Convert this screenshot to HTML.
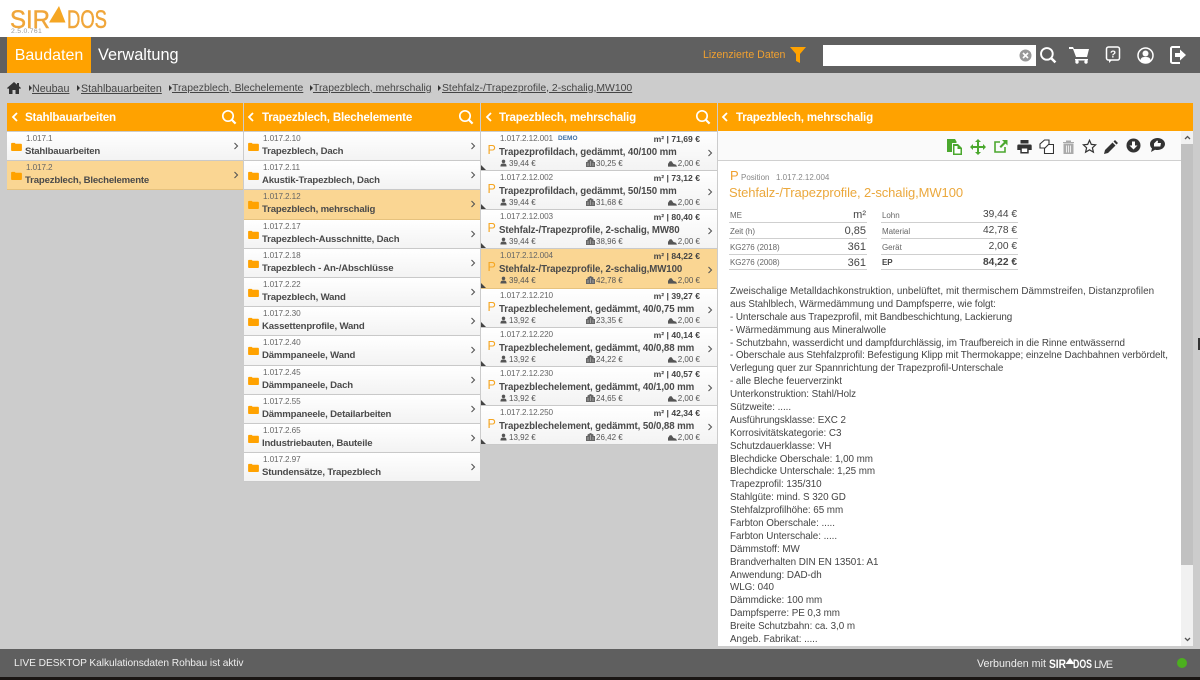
<!DOCTYPE html>
<html lang="de"><head><meta charset="utf-8"><title>SIRADOS</title>
<style>
*{box-sizing:border-box}
html,body{margin:0;padding:0;width:1200px;height:680px;overflow:hidden;background:#cccccc;font-family:"Liberation Sans",sans-serif;color:#444}
.a{position:absolute;white-space:nowrap}
#top{position:absolute;left:0;top:0;width:1200px;height:37px;background:#fff}
#nav{position:absolute;left:0;top:37px;width:1200px;height:36px;background:#606060}
#bau{position:absolute;left:7px;top:37px;width:84px;height:36px;background:#ffa200;color:#fff;font-size:16px;line-height:37px;text-align:center}
.hd{position:absolute;top:103px;height:28px;background:#ffa200;color:#fff;font-weight:bold;font-size:11.6px;line-height:27px;letter-spacing:-.2px}
.hd b{position:absolute;left:18px;top:1px;white-space:nowrap}
.c{position:absolute;background:#fff}
.r{position:absolute;left:0;background:linear-gradient(#fff,#f3f3f3);border-bottom:1px solid #c9c9c9}
.r.s{background:#fad693;border-bottom-color:#e6c27e}
.code{position:absolute;left:19px;top:2px;font-size:8.2px;letter-spacing:-.12px;color:#666;white-space:nowrap}
.t{position:absolute;left:18px;top:14px;font-size:9.6px;letter-spacing:-.17px;font-weight:bold;color:#4a4a4a;white-space:nowrap}
.i{position:absolute}
.code3{position:absolute;left:19px;top:2px;font-size:8.2px;letter-spacing:-.12px;color:#666;white-space:nowrap}
.code3 b{position:absolute;left:58px;top:1px;color:#3b6ea5;font-size:6.5px;letter-spacing:0}
.pr{position:absolute;right:17px;top:2px;font-size:8.6px;font-weight:bold;color:#444;white-space:nowrap}
.t3{position:absolute;left:18px;top:14.5px;font-size:9.7px;letter-spacing:-.09px;font-weight:bold;color:#4a4a4a;white-space:nowrap}
.p{position:absolute;left:6.5px;top:10.5px;font-size:12.5px;color:#f5a623}
.v{position:absolute;top:26.5px;font-size:8px;color:#555;white-space:nowrap}
.bc{position:absolute;top:82.5px;font-size:10.4px;color:#444;text-decoration:underline;white-space:nowrap}
.tri{position:absolute;top:85px;width:0;height:0;border-left:3px solid #333;border-top:3px solid transparent;border-bottom:3px solid transparent}
.lab{position:absolute;font-size:8px;letter-spacing:-.05px;color:#666;white-space:nowrap}
.val{position:absolute;font-size:10.2px;color:#444;text-align:right;white-space:nowrap}
.ln{position:absolute;height:1px;background:#cfcfcf}
#txt{position:absolute;left:730px;top:286px;width:450px;font-size:9.85px;letter-spacing:-.05px;line-height:12.89px;color:#444;white-space:pre}
</style></head><body>
<svg width="0" height="0" style="position:absolute"><defs>
<symbol id="folder" viewBox="0 0 12 10"><path d="M0 2a1 1 0 0 1 1-1h3l1 1h6a1 1 0 0 1 1 1v6a1 1 0 0 1-1 1H1a1 1 0 0 1-1-1z" fill="#ffa200"/></symbol>
<symbol id="chev" viewBox="0 0 6 8"><path d="M1.5 1l3 3-3 3" fill="none" stroke="#555" stroke-width="1.1"/></symbol>
<symbol id="back" viewBox="0 0 8 12"><path d="M6 2L2 6l4 4" fill="none" stroke="#fff" stroke-width="1.8"/></symbol>
<symbol id="search" viewBox="0 0 16 16"><circle cx="7" cy="7" r="5.2" fill="none" stroke="#fff" stroke-width="1.7"/><path d="M11 11l3.600 3.600" stroke="#fff" stroke-width="2.2"/></symbol>
<symbol id="person" viewBox="0 0 8 8"><circle cx="4" cy="2.2" r="2" fill="#555"/><path d="M0.5 8c0-3 1.500-3.400 3.500-3.400S7.500 5 7.500 8z" fill="#555"/></symbol>
<symbol id="bld" viewBox="0 0 9 8"><path d="M0 8V3h1.500V1.500L4.500 0l3 1.500V3H9v5z" fill="#666"/><path d="M2 4v3M4.500 2v5M7 4v3" stroke="#ccc" stroke-width=".6"/></symbol>
<symbol id="hat" viewBox="0 0 10 8"><path d="M0 8V5l2-3h2l2 3 3 1 1 2z" fill="#555"/></symbol>
<symbol id="corner" viewBox="0 0 5 5"><path d="M0 0l5 5H0z" fill="#444"/></symbol>
</defs></svg>

<div id="top"></div>
<svg class="a" style="left:8px;top:5px" width="104" height="30" viewBox="0 0 104 30">
<text x="2" y="23" font-family="Liberation Sans" font-size="25" fill="#f0a63a" stroke="#f0a63a" stroke-width=".5" textLength="40" lengthAdjust="spacingAndGlyphs">SIR</text>
<path d="M51 1L41 17.500h16.500z" fill="#f5a623"/>
<text x="59" y="23" font-family="Liberation Sans" font-size="25" fill="#f0a63a" stroke="#f0a63a" stroke-width=".5" textLength="40" lengthAdjust="spacingAndGlyphs">DOS</text>
</svg>
<div class="a" style="left:11px;top:28px;font-size:6.8px;color:#999;letter-spacing:.3px">2.5.0.761</div>

<div id="nav"></div><div id="bau">Baudaten</div>
<div class="a" style="left:98px;top:46px;font-size:16.3px;color:#fff">Verwaltung</div>
<div class="a" style="left:703px;top:49px;font-size:10.6px;color:#f0a030">Lizenzierte Daten</div>
<svg class="a" style="left:790px;top:46px" width="16" height="18" viewBox="0 0 16 18"><path d="M0 1h16L10 8v9l-4-2V8z" fill="#ffa200"/></svg>
<div class="a" style="left:823px;top:45px;width:213px;height:21px;background:#fff"></div>
<svg class="a" style="left:1019px;top:49px" width="13" height="13" viewBox="0 0 13 13"><circle cx="6.500" cy="6.500" r="6" fill="#999"/><path d="M4 4l5 5M9 4l-5 5" stroke="#fff" stroke-width="1.600"/></svg>
<svg class="a" style="left:1039px;top:46px" width="18" height="18"><use href="#search"/></svg>
<svg class="a" style="left:1069px;top:46px" width="21" height="18" viewBox="0 0 21 18"><path d="M0 1h4l1 2h15l-2 8H7L4 3H0zM6 13h13v1.500H6z" fill="#fff"/><circle cx="8" cy="16" r="1.700" fill="#fff"/><circle cx="17" cy="16" r="1.700" fill="#fff"/></svg>
<svg class="a" style="left:1105px;top:46px" width="16" height="18" viewBox="0 0 16 18"><rect x="1.500" y="1" width="13" height="13" rx="2" fill="none" stroke="#fff" stroke-width="1.500"/><path d="M4 14v3l3-3z" fill="#fff"/><text x="8" y="11.500" font-family="Liberation Sans" font-size="10" font-weight="bold" fill="#fff" text-anchor="middle">?</text></svg>
<svg class="a" style="left:1137px;top:47px" width="17" height="17" viewBox="0 0 17 17"><circle cx="8.500" cy="8.500" r="7.500" fill="none" stroke="#fff" stroke-width="1.500"/><circle cx="8.500" cy="6.500" r="3" fill="#fff"/><path d="M3.500 14c0-3.500 2-4 5-4s5 .5 5 4l-5 2z" fill="#fff"/></svg>
<svg class="a" style="left:1170px;top:46px" width="17" height="18" viewBox="0 0 17 18"><path d="M10 1H2.500A1.500 1.500 0 0 0 1 2.500v13A1.500 1.500 0 0 0 2.500 17H10" fill="none" stroke="#fff" stroke-width="2"/><path d="M5 7h5V3.500L16 9l-6 5.500V11H5z" fill="#fff"/></svg>

<svg class="a" style="left:7px;top:82px" width="14" height="12" viewBox="0 0 14 12"><path d="M7 0L0 6l1 1 1-.8V12h3.500V8h3v4H12V6.200l1 .8 1-1-2-1.700V1h-2v1.600z" fill="#333"/></svg>
<div class="tri" style="left:29px"></div><div class="bc" style="left:32px;font-size:10.7px">Neubau</div>
<div class="tri" style="left:77px"></div><div class="bc" style="left:81px;font-size:10.7px">Stahlbauarbeiten</div>
<div class="tri" style="left:169px"></div><div class="bc" style="left:172px">Trapezblech, Blechelemente</div>
<div class="tri" style="left:310px"></div><div class="bc" style="left:313px">Trapezblech, mehrschalig</div>
<div class="tri" style="left:438px"></div><div class="bc" style="left:442px">Stehfalz-/Trapezprofile, 2-schalig,MW100</div>

<!-- headers -->
<div class="hd" style="left:7px;width:236px"><svg class="i" style="left:4px;top:8px" width="8" height="12"><use href="#back"/></svg><b>Stahlbauarbeiten</b><svg class="i" style="left:214px;top:6px" width="16" height="16"><use href="#search"/></svg></div>
<div class="hd" style="left:244px;width:236px"><svg class="i" style="left:3px;top:8px" width="8" height="12"><use href="#back"/></svg><b>Trapezblech, Blechelemente</b><svg class="i" style="left:214px;top:6px" width="16" height="16"><use href="#search"/></svg></div>
<div class="hd" style="left:481px;width:236px"><svg class="i" style="left:4px;top:8px" width="8" height="12"><use href="#back"/></svg><b>Trapezblech, mehrschalig</b><svg class="i" style="left:214px;top:6px" width="16" height="16"><use href="#search"/></svg></div>
<div class="hd" style="left:718px;width:475px"><svg class="i" style="left:3px;top:8px" width="8" height="12"><use href="#back"/></svg><b>Trapezblech, mehrschalig</b></div>

<!-- col 1 -->
<div class="c" style="left:7px;top:132px;width:236px;height:58px;background:none">
<div class="r" style="top:0;width:236px;height:29px"><svg class="i" style="left:4px;top:10px" width="11" height="9"><use href="#folder"/></svg><span class="code">1.017.1</span><span class="t">Stahlbauarbeiten</span><svg class="i" style="left:226px;top:10px" width="6" height="8"><use href="#chev"/></svg></div>
<div class="r s" style="top:29px;width:236px;height:29px"><svg class="i" style="left:4px;top:10px" width="11" height="9"><use href="#folder"/></svg><span class="code">1.017.2</span><span class="t">Trapezblech, Blechelemente</span><svg class="i" style="left:226px;top:10px" width="6" height="8"><use href="#chev"/></svg></div>
</div>

<!-- col 2 -->
<div class="c" style="left:244px;top:132px;width:236px;height:350px;background:none">
<div class="r" style="top:0;width:236px;height:29px"><svg class="i" style="left:4px;top:10px" width="11" height="9"><use href="#folder"/></svg><span class="code">1.017.2.10</span><span class="t">Trapezblech, Dach</span><svg class="i" style="left:226px;top:10px" width="6" height="8"><use href="#chev"/></svg></div>
<div class="r" style="top:29px;width:236px;height:29px"><svg class="i" style="left:4px;top:10px" width="11" height="9"><use href="#folder"/></svg><span class="code">1.017.2.11</span><span class="t">Akustik-Trapezblech, Dach</span><svg class="i" style="left:226px;top:10px" width="6" height="8"><use href="#chev"/></svg></div>
<div class="r s" style="top:58px;width:236px;height:30px"><svg class="i" style="left:4px;top:10px" width="11" height="9"><use href="#folder"/></svg><span class="code">1.017.2.12</span><span class="t">Trapezblech, mehrschalig</span><svg class="i" style="left:226px;top:10px" width="6" height="8"><use href="#chev"/></svg></div>
<div class="r" style="top:88px;width:236px;height:29px"><svg class="i" style="left:4px;top:10px" width="11" height="9"><use href="#folder"/></svg><span class="code">1.017.2.17</span><span class="t">Trapezblech-Ausschnitte, Dach</span><svg class="i" style="left:226px;top:10px" width="6" height="8"><use href="#chev"/></svg></div>
<div class="r" style="top:117px;width:236px;height:29px"><svg class="i" style="left:4px;top:10px" width="11" height="9"><use href="#folder"/></svg><span class="code">1.017.2.18</span><span class="t">Trapezblech - An-/Abschlüsse</span><svg class="i" style="left:226px;top:10px" width="6" height="8"><use href="#chev"/></svg></div>
<div class="r" style="top:146px;width:236px;height:29px"><svg class="i" style="left:4px;top:10px" width="11" height="9"><use href="#folder"/></svg><span class="code">1.017.2.22</span><span class="t">Trapezblech, Wand</span><svg class="i" style="left:226px;top:10px" width="6" height="8"><use href="#chev"/></svg></div>
<div class="r" style="top:175px;width:236px;height:29px"><svg class="i" style="left:4px;top:10px" width="11" height="9"><use href="#folder"/></svg><span class="code">1.017.2.30</span><span class="t">Kassettenprofile, Wand</span><svg class="i" style="left:226px;top:10px" width="6" height="8"><use href="#chev"/></svg></div>
<div class="r" style="top:204px;width:236px;height:30px"><svg class="i" style="left:4px;top:10px" width="11" height="9"><use href="#folder"/></svg><span class="code">1.017.2.40</span><span class="t">Dämmpaneele, Wand</span><svg class="i" style="left:226px;top:10px" width="6" height="8"><use href="#chev"/></svg></div>
<div class="r" style="top:234px;width:236px;height:29px"><svg class="i" style="left:4px;top:10px" width="11" height="9"><use href="#folder"/></svg><span class="code">1.017.2.45</span><span class="t">Dämmpaneele, Dach</span><svg class="i" style="left:226px;top:10px" width="6" height="8"><use href="#chev"/></svg></div>
<div class="r" style="top:263px;width:236px;height:29px"><svg class="i" style="left:4px;top:10px" width="11" height="9"><use href="#folder"/></svg><span class="code">1.017.2.55</span><span class="t">Dämmpaneele, Detailarbeiten</span><svg class="i" style="left:226px;top:10px" width="6" height="8"><use href="#chev"/></svg></div>
<div class="r" style="top:292px;width:236px;height:29px"><svg class="i" style="left:4px;top:10px" width="11" height="9"><use href="#folder"/></svg><span class="code">1.017.2.65</span><span class="t">Industriebauten, Bauteile</span><svg class="i" style="left:226px;top:10px" width="6" height="8"><use href="#chev"/></svg></div>
<div class="r" style="top:321px;width:236px;height:29px"><svg class="i" style="left:4px;top:10px" width="11" height="9"><use href="#folder"/></svg><span class="code">1.017.2.97</span><span class="t">Stundensätze, Trapezblech</span><svg class="i" style="left:226px;top:10px" width="6" height="8"><use href="#chev"/></svg></div>
</div>

<!-- col 3 -->
<div class="c" style="left:481px;top:132px;width:236px;height:313px;background:none">
<div class="r" style="top:0;width:236px;height:39px"><span class="p">P</span><span class="code3">1.017.2.12.001<b>DEMO</b></span><span class="pr">m² | 71,69 €</span><span class="t3">Trapezprofildach, gedämmt, 40/100 mm</span><svg class="i" style="left:19px;top:27px" width="7" height="8"><use href="#person"/></svg><span class="v" style="left:28px">39,44 €</span><svg class="i" style="left:105px;top:27px" width="9" height="8"><use href="#bld"/></svg><span class="v" style="left:115px">30,25 €</span><svg class="i" style="left:187px;top:27px" width="9" height="8"><use href="#hat"/></svg><span class="v" style="right:17px">2,00 €</span><svg class="i" style="left:226px;top:17px" width="6" height="8"><use href="#chev"/></svg><svg class="i" style="left:0;top:33px" width="5" height="5"><use href="#corner"/></svg></div>
<div class="r" style="top:39px;width:236px;height:39px"><span class="p">P</span><span class="code3">1.017.2.12.002</span><span class="pr">m² | 73,12 €</span><span class="t3">Trapezprofildach, gedämmt, 50/150 mm</span><svg class="i" style="left:19px;top:27px" width="7" height="8"><use href="#person"/></svg><span class="v" style="left:28px">39,44 €</span><svg class="i" style="left:105px;top:27px" width="9" height="8"><use href="#bld"/></svg><span class="v" style="left:115px">31,68 €</span><svg class="i" style="left:187px;top:27px" width="9" height="8"><use href="#hat"/></svg><span class="v" style="right:17px">2,00 €</span><svg class="i" style="left:226px;top:17px" width="6" height="8"><use href="#chev"/></svg><svg class="i" style="left:0;top:33px" width="5" height="5"><use href="#corner"/></svg></div>
<div class="r" style="top:78px;width:236px;height:39px"><span class="p">P</span><span class="code3">1.017.2.12.003</span><span class="pr">m² | 80,40 €</span><span class="t3">Stehfalz-/Trapezprofile, 2-schalig, MW80</span><svg class="i" style="left:19px;top:27px" width="7" height="8"><use href="#person"/></svg><span class="v" style="left:28px">39,44 €</span><svg class="i" style="left:105px;top:27px" width="9" height="8"><use href="#bld"/></svg><span class="v" style="left:115px">38,96 €</span><svg class="i" style="left:187px;top:27px" width="9" height="8"><use href="#hat"/></svg><span class="v" style="right:17px">2,00 €</span><svg class="i" style="left:226px;top:17px" width="6" height="8"><use href="#chev"/></svg><svg class="i" style="left:0;top:33px" width="5" height="5"><use href="#corner"/></svg></div>
<div class="r s" style="top:117px;width:236px;height:40px"><span class="p">P</span><span class="code3">1.017.2.12.004</span><span class="pr">m² | 84,22 €</span><span class="t3">Stehfalz-/Trapezprofile, 2-schalig,MW100</span><svg class="i" style="left:19px;top:27px" width="7" height="8"><use href="#person"/></svg><span class="v" style="left:28px">39,44 €</span><svg class="i" style="left:105px;top:27px" width="9" height="8"><use href="#bld"/></svg><span class="v" style="left:115px">42,78 €</span><svg class="i" style="left:187px;top:27px" width="9" height="8"><use href="#hat"/></svg><span class="v" style="right:17px">2,00 €</span><svg class="i" style="left:226px;top:17px" width="6" height="8"><use href="#chev"/></svg><svg class="i" style="left:0;top:34px" width="5" height="5"><use href="#corner"/></svg></div>
<div class="r" style="top:157px;width:236px;height:39px"><span class="p">P</span><span class="code3">1.017.2.12.210</span><span class="pr">m² | 39,27 €</span><span class="t3">Trapezblechelement, gedämmt, 40/0,75 mm</span><svg class="i" style="left:19px;top:27px" width="7" height="8"><use href="#person"/></svg><span class="v" style="left:28px">13,92 €</span><svg class="i" style="left:105px;top:27px" width="9" height="8"><use href="#bld"/></svg><span class="v" style="left:115px">23,35 €</span><svg class="i" style="left:187px;top:27px" width="9" height="8"><use href="#hat"/></svg><span class="v" style="right:17px">2,00 €</span><svg class="i" style="left:226px;top:17px" width="6" height="8"><use href="#chev"/></svg><svg class="i" style="left:0;top:33px" width="5" height="5"><use href="#corner"/></svg></div>
<div class="r" style="top:196px;width:236px;height:39px"><span class="p">P</span><span class="code3">1.017.2.12.220</span><span class="pr">m² | 40,14 €</span><span class="t3">Trapezblechelement, gedämmt, 40/0,88 mm</span><svg class="i" style="left:19px;top:27px" width="7" height="8"><use href="#person"/></svg><span class="v" style="left:28px">13,92 €</span><svg class="i" style="left:105px;top:27px" width="9" height="8"><use href="#bld"/></svg><span class="v" style="left:115px">24,22 €</span><svg class="i" style="left:187px;top:27px" width="9" height="8"><use href="#hat"/></svg><span class="v" style="right:17px">2,00 €</span><svg class="i" style="left:226px;top:17px" width="6" height="8"><use href="#chev"/></svg><svg class="i" style="left:0;top:33px" width="5" height="5"><use href="#corner"/></svg></div>
<div class="r" style="top:235px;width:236px;height:39px"><span class="p">P</span><span class="code3">1.017.2.12.230</span><span class="pr">m² | 40,57 €</span><span class="t3">Trapezblechelement, gedämmt, 40/1,00 mm</span><svg class="i" style="left:19px;top:27px" width="7" height="8"><use href="#person"/></svg><span class="v" style="left:28px">13,92 €</span><svg class="i" style="left:105px;top:27px" width="9" height="8"><use href="#bld"/></svg><span class="v" style="left:115px">24,65 €</span><svg class="i" style="left:187px;top:27px" width="9" height="8"><use href="#hat"/></svg><span class="v" style="right:17px">2,00 €</span><svg class="i" style="left:226px;top:17px" width="6" height="8"><use href="#chev"/></svg><svg class="i" style="left:0;top:33px" width="5" height="5"><use href="#corner"/></svg></div>
<div class="r" style="top:274px;width:236px;height:39px"><span class="p">P</span><span class="code3">1.017.2.12.250</span><span class="pr">m² | 42,34 €</span><span class="t3">Trapezblechelement, gedämmt, 50/0,88 mm</span><svg class="i" style="left:19px;top:27px" width="7" height="8"><use href="#person"/></svg><span class="v" style="left:28px">13,92 €</span><svg class="i" style="left:105px;top:27px" width="9" height="8"><use href="#bld"/></svg><span class="v" style="left:115px">26,42 €</span><svg class="i" style="left:187px;top:27px" width="9" height="8"><use href="#hat"/></svg><span class="v" style="right:17px">2,00 €</span><svg class="i" style="left:226px;top:17px" width="6" height="8"><use href="#chev"/></svg><svg class="i" style="left:0;top:33px" width="5" height="5"><use href="#corner"/></svg></div>
</div>

<!-- col 4 -->
<div class="c" style="left:718px;top:131px;width:475px;height:515px"></div>
<div class="a" style="left:718px;top:131px;width:463px;height:30px;background:#fafafa;border-bottom:1px solid #d0d0d0"></div>
<div class="a" style="left:1181px;top:131px;width:12px;height:515px;background:#f1f1f1"></div>
<div class="a" style="left:1181px;top:144px;width:12px;height:421px;background:#c1c1c1"></div>
<svg class="a" style="left:1184px;top:135px" width="7" height="5" viewBox="0 0 7 5"><path d="M1 4l2.500-2.500L6 4" fill="none" stroke="#555" stroke-width="1.300"/></svg>
<svg class="a" style="left:1184px;top:637px" width="7" height="5" viewBox="0 0 7 5"><path d="M1 1l2.500 2.500L6 1" fill="none" stroke="#555" stroke-width="1.300"/></svg>
<div class="a" style="left:1198px;top:338px;width:2px;height:12px;background:#333"></div>

<!-- toolbar -->
<svg class="a" style="left:946px;top:139px" width="17" height="16" viewBox="0 0 17 16"><path d="M1 0h8l1.500 2.500V4H6v9H1z" fill="#4ba82e"/><path d="M7 5h5l4 4v7H7z" fill="#4ba82e"/><path d="M8.500 7v7.500h6V10h-3V7z" fill="#fff"/></svg>
<svg class="a" style="left:970px;top:139px" width="16" height="16" viewBox="0 0 16 16"><path d="M8 0l3 3H9v4h4V5l3 3-3 3V9H9v4h2l-3 3-3-3h2V9H3v2L0 8l3-3v2h4V3H5z" fill="#4ba82e"/></svg>
<svg class="a" style="left:993px;top:139px" width="15" height="15" viewBox="0 0 15 15"><path d="M7 3H2v10h10V8" fill="none" stroke="#4ba82e" stroke-width="1.600"/><path d="M9 1h5.500v5.500L12.500 4.500 8 9 6.500 7.500 11 3z" fill="#4ba82e"/></svg>
<svg class="a" style="left:1017px;top:140px" width="15" height="14" viewBox="0 0 15 14"><path d="M3.500 0h8v3.500h-8zM1.500 4.500h12a1.200 1.200 0 0 1 1.200 1.200V10h-3v3.500h-8.400V10H.3V5.700a1.200 1.200 0 0 1 1.200-1.200z" fill="#333"/><path d="M4.800 8.500h5.400V12H4.800z" fill="#fff"/></svg>
<svg class="a" style="left:1039px;top:139px" width="15" height="15" viewBox="0 0 15 15"><path d="M5.500 1H10v8H1V5z" fill="#fff" stroke="#333" stroke-width="1.100"/><path d="M9.500 5.500h5v9H5.500V9.500z" fill="#fff" stroke="#333" stroke-width="1.100"/></svg>
<svg class="a" style="left:1062px;top:140px" width="13" height="14" viewBox="0 0 13 14"><path d="M1 2.500h11M4.500 2.500V1h4v1.500M2 4h9v10H2z" fill="#aaa" stroke="#aaa"/><path d="M4.500 5.500v7M6.500 5.500v7M8.500 5.500v7" stroke="#eee"/></svg>
<svg class="a" style="left:1082px;top:139px" width="15" height="15" viewBox="0 0 15 15"><path d="M7.500 1.300l1.800 4.100 4.400.4-3.300 3 1 4.300-3.900-2.300-3.900 2.300 1-4.300-3.300-3 4.400-.4z" fill="none" stroke="#333" stroke-width="1.200"/></svg>
<svg class="a" style="left:1104px;top:140px" width="14" height="14" viewBox="0 0 14 14"><path d="M0 14l1-4 7.500-7.500 3 3L4 13zM9.500 1.500L11 0l3 3-1.500 1.500z" fill="#333"/></svg>
<svg class="a" style="left:1126px;top:138px" width="15" height="15" viewBox="0 0 15 15"><circle cx="7.500" cy="7.500" r="7" fill="#333"/><path d="M6 3.500h3v4h2.500l-4 4-4-4H6z" fill="#fff"/></svg>
<svg class="a" style="left:1149px;top:137px" width="17" height="16" viewBox="0 0 17 16"><path d="M8.500 1c4 0 7.500 2.500 7.500 6s-3.500 6-7.500 6c-1 0-1.700 0-2.500-.3L2 15l1-3.500C1.800 10.500 1 9 1 7c0-3.500 3.500-6 7.500-6z" fill="#333"/><path d="M5 9.500V6.500l3-3 1 .5-.3 2H12l-.7 3.500z" fill="#fff"/></svg>

<!-- details -->
<div class="a" style="left:730px;top:168px;font-size:13px;color:#f0a030">P</div>
<div class="a" style="left:741px;top:173px;font-size:8px;color:#888">Position</div>
<div class="a" style="left:776px;top:173px;font-size:8px;color:#888">1.017.2.12.004</div>
<div class="a" style="left:729px;top:185px;font-size:13px;letter-spacing:-.1px;color:#eba83d">Stehfalz-/Trapezprofile, 2-schalig,MW100</div>

<div class="lab" style="left:730px;top:210.5px">ME</div><div class="val" style="left:826px;width:40px;top:209px;font-size:11px">m²</div>
<div class="lab" style="left:730px;top:226.5px">Zeit (h)</div><div class="val" style="left:826px;width:40px;top:225px;font-size:11px">0,85</div>
<div class="lab" style="left:730px;top:242.5px">KG276 (2018)</div><div class="val" style="left:826px;width:40px;top:241px;font-size:11px">361</div>
<div class="lab" style="left:730px;top:258px">KG276 (2008)</div><div class="val" style="left:826px;width:40px;top:256.500px;font-size:11px">361</div>
<div class="ln" style="left:729px;width:138px;top:222px"></div><div class="ln" style="left:729px;width:138px;top:238px"></div><div class="ln" style="left:729px;width:138px;top:254px"></div><div class="ln" style="left:729px;width:138px;top:269px"></div>
<div class="lab" style="left:882px;top:210.5px">Lohn</div><div class="val" style="left:958px;width:59px;top:209px">39,44 €</div>
<div class="lab" style="left:882px;top:226.5px">Material</div><div class="val" style="left:958px;width:59px;top:225px">42,78 €</div>
<div class="lab" style="left:882px;top:242.5px">Gerät</div><div class="val" style="left:958px;width:59px;top:241px">2,00 €</div>
<div class="lab" style="left:882px;top:258px;font-weight:bold;color:#444">EP</div><div class="val" style="left:958px;width:59px;top:256.500px;font-weight:bold">84,22 €</div>
<div class="ln" style="left:881px;width:137px;top:222px"></div><div class="ln" style="left:881px;width:137px;top:238px"></div><div class="ln" style="left:881px;width:137px;top:254px"></div><div class="ln" style="left:881px;width:137px;top:269px"></div>

<div id="txt"><span style="letter-spacing:.03px">Zweischalige Metalldachkonstruktion, unbelüftet, mit thermischem Dämmstreifen, Distanzprofilen</span>
aus Stahlblech, Wärmedämmung und Dampfsperre, wie folgt:
<span style="letter-spacing:-.08px">- Unterschale aus Trapezprofil, mit Bandbeschichtung, Lackierung</span>
- Wärmedämmung aus Mineralwolle
<span style="letter-spacing:-.07px">- Schutzbahn, wasserdicht und dampfdurchlässig, im Traufbereich in die Rinne entwässernd</span>
<span style="letter-spacing:-.08px">- Oberschale aus Stehfalzprofil: Befestigung Klipp mit Thermokappe; einzelne Dachbahnen verbördelt,</span>
Verlegung quer zur Spannrichtung der Trapezprofil-Unterschale
- alle Bleche feuerverzinkt
Unterkonstruktion: Stahl/Holz
Sützweite: .....
Ausführungsklasse: EXC 2
Korrosivitätskategorie: C3
Schutzdauerklasse: VH
Blechdicke Oberschale: 1,00 mm
Blechdicke Unterschale: 1,25 mm
Trapezprofil: 135/310
Stahlgüte: mind. S 320 GD
Stehfalzprofilhöhe: 65 mm
Farbton Oberschale: .....
Farbton Unterschale: .....
Dämmstoff: MW
Brandverhalten DIN EN 13501: A1
Anwendung: DAD-dh
WLG: 040
Dämmdicke: 100 mm
Dampfsperre: PE 0,3 mm
Breite Schutzbahn: ca. 3,0 m
Angeb. Fabrikat: .....</div>

<!-- footer -->
<div class="a" style="left:0;top:649px;width:1200px;height:28px;background:#5f5f5f"></div>
<div class="a" style="left:0;top:677px;width:1200px;height:3px;background:#1a1614"></div>
<div class="a" style="left:14px;top:657.5px;font-size:10.2px;letter-spacing:-.05px;color:#eee">LIVE DESKTOP Kalkulationsdaten Rohbau ist aktiv</div>
<div class="a" style="left:977px;top:657.5px;font-size:10.7px;color:#eee">Verbunden mit</div>
<svg class="a" style="left:1048px;top:655px" width="68" height="15" viewBox="0 0 68 15">
<text x="1" y="13" font-family="Liberation Sans" font-size="11.5" font-weight="bold" fill="#fff" textLength="17" lengthAdjust="spacingAndGlyphs">SIR</text>
<path d="M17.500 9l4.500-6 4.500 6z" fill="#fff"/>
<text x="25" y="13" font-family="Liberation Sans" font-size="11.5" font-weight="bold" fill="#fff" textLength="19" lengthAdjust="spacingAndGlyphs">DOS</text>
<text x="46" y="13" font-family="Liberation Sans" font-size="10.7" fill="#eee" textLength="19">LIVE</text>
</svg>
<div class="a" style="left:1177px;top:658px;width:10px;height:10px;border-radius:50%;background:#4caf1f"></div>
</body></html>
